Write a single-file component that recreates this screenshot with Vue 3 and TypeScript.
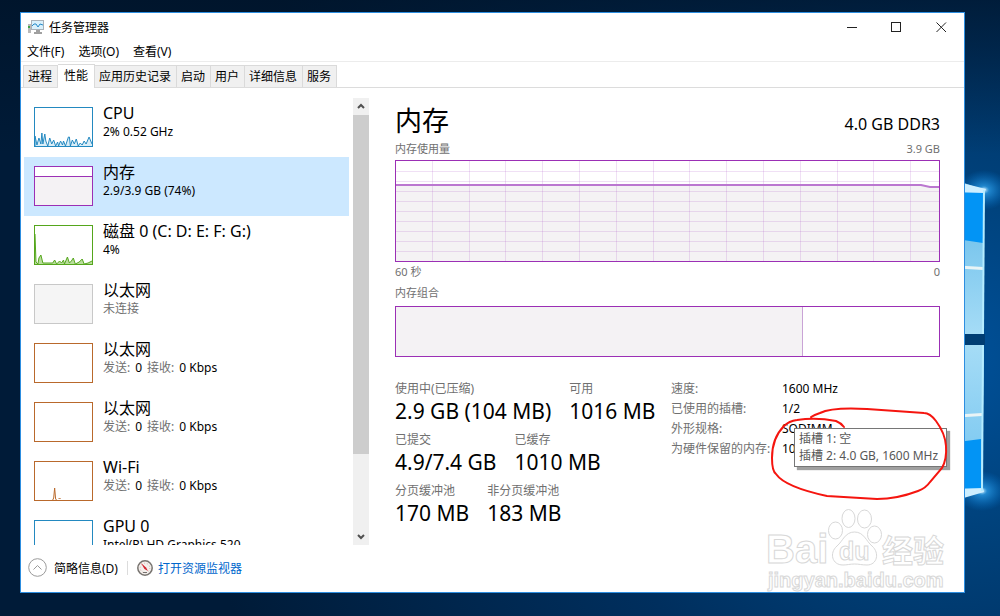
<script setup lang="ts">
interface Resource {
  name: string
  kind: 'cpu' | 'memory' | 'disk' | 'offline' | 'network' | 'gpu'
  parts: { text: string; muted?: boolean }[]
  line?: string
  fill?: boolean
}

const menus: string[] = ['文件(F)', '选项(O)', '查看(V)']
const tabs: string[] = ['进程', '性能', '应用历史记录', '启动', '用户', '详细信息', '服务']
const activeTab = '性能'

const traffic = [
  { text: '发送:', muted: true },
  { text: '0' },
  { text: '接收:', muted: true },
  { text: '0 Kbps' },
]

const resources: Resource[] = [
  {
    name: 'CPU',
    kind: 'cpu',
    parts: [{ text: '2% 0.52 GHz' }],
    line: 'M0 38 L0 28 L2 37 L4 30 L6 36 L7 25 L8 36 L10 26 L11 33 L13 38 L15 30 L17 36 L19 32 L21 38 L23 34 L24 38 L26 33 L28 37 L29 33 L31 38 L34 29 L35 29 L36 38 L38 32 L40 36 L42 31 L44 38 L46 35 L48 37 L50 33 L52 36 L55 29 L58 36',
    fill: true,
  },
  {
    name: '内存',
    kind: 'memory',
    parts: [{ text: '2.9/3.9 GB (74%)' }],
    line: 'M0 9.5 L58 9.5',
    fill: true,
  },
  {
    name: '磁盘 0 (C: D: E: F: G:)',
    kind: 'disk',
    parts: [{ text: '4%' }],
    line: 'M0 8 L1 36 L3 38 L4 32 L6 29 L8 37 L18 37 L20 34 L22 38 L25 35 L27 37 L29 34 L30 38 L33 31 L35 37 L37 35 L39 32 L41 38 L45 36 L48 33 L50 38 L54 37 L58 35',
    fill: true,
  },
  { name: '以太网', kind: 'offline', parts: [{ text: '未连接', muted: true }] },
  { name: '以太网', kind: 'network', parts: traffic },
  { name: '以太网', kind: 'network', parts: traffic },
  {
    name: 'Wi-Fi',
    kind: 'network',
    parts: traffic,
    line: 'M18 38 L19 36 L20 26 L21 37 L22 38 M24 37 L25 36 L26 37',
    fill: true,
  },
  { name: 'GPU 0', kind: 'gpu', parts: [{ text: 'Intel(R) HD Graphics 520' }] },
]
const selected = 1

const gridColumns: number[] = Array.from({ length: 14 }, (_, i) => Math.round((i + 1) * 36.8))
const gridRows: number[] = Array.from({ length: 9 }, (_, i) => (i + 1) * 10)

const usedShare = 75

const stats: { label: string; value: string }[][] = [
  [
    { label: '使用中(已压缩)', value: '2.9 GB (104 MB)' },
    { label: '可用', value: '1016 MB' },
  ],
  [
    { label: '已提交', value: '4.9/7.4 GB' },
    { label: '已缓存', value: '1010 MB' },
  ],
  [
    { label: '分页缓冲池', value: '170 MB' },
    { label: '非分页缓冲池', value: '183 MB' },
  ],
]

const specs: { label: string; value: string }[] = [
  { label: '速度:', value: '1600 MHz' },
  { label: '已使用的插槽:', value: '1/2' },
  { label: '外形规格:', value: 'SODIMM' },
  { label: '为硬件保留的内存:', value: '101 MB' },
]
</script>

<template>
  <div class="desktop">
    <svg class="wallpaper" viewBox="0 0 1000 616" preserveAspectRatio="xMaxYMid slice" aria-hidden="true">
      <defs>
        <radialGradient id="glow" gradientUnits="userSpaceOnUse" cx="950" cy="360" r="760">
          <stop offset="0" stop-color="#00519a" />
          <stop offset="0.22" stop-color="#00427c" />
          <stop offset="0.5" stop-color="#002f5e" />
          <stop offset="1" stop-color="#001b38" />
        </radialGradient>
        <radialGradient id="flare">
          <stop offset="0" stop-color="#d8f3ff" />
          <stop offset="0.2" stop-color="#2fa4f0" stop-opacity="0.7" />
          <stop offset="1" stop-color="#0078d7" stop-opacity="0" />
        </radialGradient>
        <linearGradient id="paneTop" x1="0" y1="0" x2="0" y2="1">
          <stop offset="0" stop-color="#5fb8e8" />
          <stop offset="1" stop-color="#a5dcf6" />
        </linearGradient>
        <linearGradient id="paneBottom" x1="0" y1="0" x2="0" y2="1">
          <stop offset="0" stop-color="#a5dcf6" />
          <stop offset="1" stop-color="#6fc2ef" />
        </linearGradient>
        <linearGradient id="shade" x1="0" y1="0" x2="0" y2="1">
          <stop offset="0" stop-color="#001226" stop-opacity="0.65" />
          <stop offset="0.25" stop-color="#001226" stop-opacity="0" />
          <stop offset="1" stop-color="#001226" stop-opacity="0" />
        </linearGradient>
      </defs>
      <rect width="1000" height="616" fill="url(#glow)" />
      <rect width="1000" height="616" fill="url(#shade)" />
      <ellipse cx="984" cy="190" rx="26" ry="20" fill="url(#flare)" />
      <ellipse cx="982" cy="491" rx="26" ry="20" fill="url(#flare)" />
      <path d="M950 178 L984 190 V334 H950Z" fill="url(#paneTop)" />
      <path d="M950 190 L983 192 V243 L950 238Z" fill="#0294f5" />
      <path d="M950 180 L986 189 L984 193 L950 192Z" fill="#cdeeff" />
      <path d="M950 265 L983 267 V270 L950 268Z" fill="#e9f4f6" />
      <path d="M984 190 L983 334" stroke="#b5ecff" stroke-width="2" />
      <path d="M950 345 H984 L982 491 L950 502Z" fill="url(#paneBottom)" />
      <path d="M950 443 L981 439 V489 H950Z" fill="#0294f5" />
      <path d="M950 415 L982 413 V416 L950 418Z" fill="#e9f4f6" />
      <path d="M950 489 L983 488 L984 492 L950 502Z" fill="#cdeeff" />
      <path d="M983 345 L982 491" stroke="#b5ecff" stroke-width="2" />
      <path d="M950 334 H985 V345 H950Z" fill="#003d73" />
    </svg>

    <div class="window">
      <header class="titlebar">
        <svg class="app-icon" viewBox="0 0 16 14" aria-hidden="true">
          <rect x="0" y="4" width="3" height="9" fill="#b9b9b9" />
          <rect x="0" y="6" width="2" height="2" fill="#3fa447" />
          <rect x="3" y="0" width="13" height="10" fill="#a9b1b8" />
          <rect x="4" y="1" width="11" height="8" fill="#d9f0fb" />
          <path d="M4 6 L6 4 L8 4 L10 7 L12 4 L15 5" fill="none" stroke="#2489c8" />
          <path d="M8 10 H12 V12 H14 V14 H6 V12 H8Z" fill="#a0a0a0" />
        </svg>
        <h1>任务管理器</h1>
        <div class="window-buttons">
          <button type="button" aria-label="最小化">
            <svg viewBox="0 0 11 11"><path d="M1 5.5 H11" /></svg>
          </button>
          <button type="button" aria-label="最大化">
            <svg viewBox="0 0 11 11"><rect x="0.5" y="0.5" width="9" height="9" /></svg>
          </button>
          <button type="button" aria-label="关闭">
            <svg viewBox="0 0 11 11"><path d="M0.5 0.5 L10 10 M10 0.5 L0.5 10" /></svg>
          </button>
        </div>
      </header>

      <nav class="menubar">
        <button v-for="menu in menus" :key="menu" type="button">{{ menu }}</button>
      </nav>

      <div class="tabs" role="tablist">
        <button
          v-for="tab in tabs"
          :key="tab"
          type="button"
          role="tab"
          :aria-selected="tab === activeTab"
          :class="{ active: tab === activeTab }"
        >{{ tab }}</button>
      </div>

      <div class="content">
        <aside class="sidebar">
          <div class="resources">
            <button
              v-for="(item, index) in resources"
              :key="index"
              type="button"
              class="resource"
              :class="[item.kind, { selected: index === selected }]"
            >
              <span class="thumb">
                <svg v-if="item.line" viewBox="0 0 58 38" preserveAspectRatio="none" aria-hidden="true">
                  <path v-if="item.fill" class="area" :d="item.line + ' V38 H0 Z'" />
                  <path class="line" :d="item.line" />
                </svg>
              </span>
              <span class="caption">
                <span class="name">{{ item.name }}</span>
                <span class="detail">
                  <span v-for="(part, n) in item.parts" :key="n" :class="{ muted: part.muted }">{{ part.text }}</span>
                </span>
              </span>
            </button>
          </div>
          <div class="scrollbar" aria-hidden="true">
            <svg viewBox="0 0 16 17"><path d="M5 10 L8 7 L11 10" /></svg>
            <div class="track"><div class="grip"></div></div>
            <svg viewBox="0 0 16 17"><path d="M5 7 L8 10 L11 7" /></svg>
          </div>
        </aside>

        <main class="details">
          <div class="heading">
            <h2>内存</h2>
            <span>4.0 GB DDR3</span>
          </div>
          <div class="axis top"><span>内存使用量</span><span>3.9 GB</span></div>
          <svg class="usage" viewBox="0 0 543 100" preserveAspectRatio="none" role="img" aria-label="内存使用量">
            <path d="M0 24 H525 L534 26 H543 V100 H0Z" fill="#f4f2f4" />
            <g class="grid">
              <path v-for="x in gridColumns" :key="'c' + x" :d="`M${x - 0.5} 0 V100`" />
              <path v-for="y in gridRows" :key="'r' + y" :d="`M0 ${y + 0.5} H543`" />
            </g>
            <path d="M0 24 H525 L534 26 H543" fill="none" stroke="#bb77d0" stroke-width="2" />
          </svg>
          <div class="axis bottom"><span>60 秒</span><span>0</span></div>
          <div class="axis composition-label"><span>内存组合</span></div>
          <div class="composition"><div class="used" :style="{ width: usedShare + '%' }"></div></div>

          <div class="figures">
            <div class="stats">
              <div v-for="(row, r) in stats" :key="r" class="stat-row">
                <div v-for="stat in row" :key="stat.label">
                  <div class="stat-label">{{ stat.label }}</div>
                  <div class="stat-value">{{ stat.value }}</div>
                </div>
              </div>
            </div>
            <div class="spec-area">
              <dl class="specs">
                <template v-for="spec in specs" :key="spec.label">
                  <dt>{{ spec.label }}</dt>
                  <dd>{{ spec.value }}</dd>
                </template>
              </dl>
              <div class="tooltip" role="tooltip">
                <div>插槽 1: 空</div>
                <div>插槽 2: 4.0 GB, 1600 MHz</div>
              </div>
              <svg class="marker" viewBox="671 379 290 130" aria-hidden="true">
                <path d="M844 427 Q841 423 836 421 Q816 417 797 420 Q789 421 784 426 Q772 438 772 458 Q772 471 776 474 Q785 487 827 496 L877 499 Q897 499 918 491 Q926 488 930 482 L942 468 Q947 459 946 446 Q945 433 936 421 Q930 413 924 413 L867 409 Q832 407 820 413 Q814 415 811 417" />
              </svg>
            </div>
          </div>
        </main>
      </div>

      <footer class="footer">
        <button type="button" class="fewer">
          <svg viewBox="0 0 19 19" aria-hidden="true">
            <circle cx="9.5" cy="9.5" r="8.8" />
            <path d="M5.5 11.5 L9.5 7.5 L13.5 11.5" />
          </svg>
          简略信息(D)
        </button>
        <span class="divider"></span>
        <a href="#resource-monitor">
          <svg viewBox="0 0 16 16" aria-hidden="true">
            <circle cx="8" cy="8" r="7.2" fill="#f3efec" stroke="#77736f" stroke-width="1.5" />
            <circle cx="8" cy="8" r="4.8" fill="none" stroke="#d8b3aa" stroke-dasharray="1 2" />
            <path d="M4 3 L9 7.5 L11 11 L7.5 9Z" fill="#d3202b" />
            <path d="M6 12.5 H10" stroke="#77736f" />
          </svg>
          <span>打开资源监视器</span>
        </a>
      </footer>

      <svg class="watermark" viewBox="744 503 220 89" aria-hidden="true">
        <text class="latin" x="766" y="563" font-size="40">Bai</text>
        <ellipse cx="835.5" cy="530.5" rx="7" ry="8.5" />
        <ellipse cx="848.5" cy="518.5" rx="6.5" ry="9" />
        <ellipse cx="864.5" cy="519" rx="7" ry="9" />
        <ellipse cx="874.5" cy="534.5" rx="7" ry="8.5" />
        <path d="M854.5 532 C864 532 866 541 872 546 C880 553 877 565 867 565 C862 565 859 564 854.5 564 C850 564 847 565 843 565 C832 565 829 553 837 546 C843 541 845 532 854.5 532Z" />
        <text class="latin" x="839" y="560" font-size="25">du</text>
        <text class="cjk" x="882" y="562" font-size="31">经验</text>
        <text class="latin" x="768" y="587" font-size="20">jingyan.baidu.com</text>
      </svg>
    </div>
  </div>
</template>

<style>
body {
  margin: 0;
}
</style>

<style scoped>
.desktop {
  position: relative;
  display: flex;
  box-sizing: border-box;
  height: 100vh;
  padding: 12px 35px 23px 20px;
  overflow: hidden;
  background: #002348;
  color: #000;
  font-family: "Noto Sans", "Noto Sans CJK SC", sans-serif;
  font-size: 12px;
}

.wallpaper {
  position: absolute;
  inset: 0;
  width: 100%;
  height: 100%;
}

.window {
  position: relative;
  display: flex;
  flex: 1;
  flex-direction: column;
  min-width: 0;
  border: 1px solid #2d8ee0;
  background: #fff;
}

button {
  margin: 0;
  padding: 0;
  border: 0;
  background: none;
  color: inherit;
  font: inherit;
}

h1,
h2,
dl,
dd {
  margin: 0;
  font-weight: 400;
}

.titlebar {
  display: flex;
  align-items: center;
  height: 28px;
  padding-left: 7px;
}

.app-icon {
  width: 16px;
  height: 14px;
  margin-right: 5px;
}

.titlebar h1 {
  flex: 1;
  font-size: 12px;
}

.window-buttons {
  display: flex;
}

.window-buttons button {
  display: grid;
  width: 45px;
  height: 28px;
  place-items: center;
}

.window-buttons svg {
  width: 11px;
  height: 11px;
  fill: none;
  stroke: #222;
}

.menubar {
  display: flex;
  gap: 14px;
  height: 20px;
  padding-left: 6px;
  border-bottom: 1px solid #ececec;
  line-height: 22px;
}

.tabs {
  display: flex;
  align-items: flex-end;
  height: 25px;
  padding-left: 2px;
  border-bottom: 1px solid #dcdcdc;
}

.tabs button {
  height: 22px;
  padding: 0 5px 0 4px;
  border: 1px solid #dadada;
  border-bottom: 0;
  border-left: 0;
  background: #f0f0f0;
  line-height: 22px;
}

.tabs button:first-child {
  border-left: 1px solid #dadada;
}

.tabs button.active {
  height: 24px;
  margin-bottom: -1px;
  padding: 0 6px 2px;
  background: #fff;
}

.content {
  display: flex;
  flex: 1;
  min-height: 0;
}

.sidebar {
  display: flex;
  flex: 0 0 345px;
  gap: 4px;
  padding: 10px 0 0 3px;
}

.resources {
  display: flex;
  flex: 1;
  flex-direction: column;
  overflow: hidden;
}

.resource {
  display: flex;
  flex: 0 0 59px;
  align-items: flex-start;
  gap: 10px;
  padding: 6px 10px 0;
  text-align: left;
}

.resource.selected {
  background: #cce8ff;
}

.thumb {
  display: block;
  flex: none;
  width: 57px;
  height: 38px;
  margin-top: 3px;
  border: 1px solid var(--accent);
  background: #fff;
}

.thumb svg {
  display: block;
  width: 100%;
  height: 100%;
}

.area {
  fill: var(--wash);
}

.line {
  fill: none;
  stroke: var(--accent);
}

.cpu,
.gpu {
  --accent: #2389c0;
  --wash: #d9edf7;
}

.memory {
  --accent: #9b2fb5;
  --wash: #f4f2f4;
}

.disk {
  --accent: #55a61c;
  --wash: #b9dd9c;
}

.network {
  --accent: #b9692c;
  --wash: none;
}

.offline {
  --accent: #c8c8c8;
}

.offline .thumb {
  background: #f5f5f5;
}

.caption {
  display: flex;
  flex-direction: column;
  line-height: 18px;
  white-space: nowrap;
}

.name {
  font-size: 16px;
}

.detail {
  display: flex;
  gap: 5px;
  line-height: 20px;
}

.muted {
  color: #707070;
}

.scrollbar {
  display: flex;
  flex: 0 0 16px;
  flex-direction: column;
  background: #f0f0f0;
}

.scrollbar svg {
  flex: 0 0 17px;
  width: 16px;
  fill: none;
  stroke: #505050;
  stroke-width: 2;
}

.track {
  flex: 1;
}

.grip {
  height: 82%;
  background: #cdcdcd;
}

.details {
  flex: 1;
  min-width: 0;
  padding: 14px 24px 0 26px;
}

.heading {
  display: flex;
  align-items: flex-end;
  justify-content: space-between;
  font-size: 16px;
  line-height: 32px;
}

.heading h2 {
  font-size: 27px;
  line-height: 38px;
}

.axis {
  display: flex;
  justify-content: space-between;
  color: #707070;
  font-size: 11px;
  line-height: 18px;
}

.axis.bottom {
  line-height: 20px;
}

.axis.composition-label {
  line-height: 22px;
}

.usage {
  display: block;
  box-sizing: border-box;
  width: 100%;
  height: 102px;
  margin-top: 2px;
  border: 1px solid #9b2fb5;
}

.grid path {
  stroke: #a040c0;
  stroke-opacity: 0.16;
}

.composition {
  box-sizing: border-box;
  height: 51px;
  margin-top: 2px;
  border: 1px solid #9b2fb5;
}

.used {
  box-sizing: border-box;
  height: 100%;
  border-right: 1px solid #c9a3d6;
  background: #f4f2f4;
}

.figures {
  display: flex;
  gap: 12px;
  margin-top: 22px;
}

.stats {
  display: flex;
  flex: 0 0 264px;
  flex-direction: column;
  gap: 7px;
}

.stat-row {
  display: flex;
  gap: 18px;
  white-space: nowrap;
}

.stat-label {
  color: #707070;
  line-height: 20px;
}

.stat-value {
  font-size: 21px;
  line-height: 24px;
}

.spec-area {
  position: relative;
  flex: 1;
}

.specs {
  display: grid;
  grid-template-columns: 111px 1fr;
  line-height: 20px;
  white-space: nowrap;
}

.specs dt {
  color: #707070;
}

.tooltip {
  position: absolute;
  top: 49px;
  left: 123px;
  padding: 1px 8px 2px 4px;
  border: 1px solid #767676;
  background: #fff;
  box-shadow: 3px 3px 1px #a0a0a0;
  color: #575757;
  line-height: 17px;
  white-space: nowrap;
}

.marker {
  position: absolute;
  top: 0;
  left: 0;
  width: 290px;
  height: 130px;
  fill: none;
  stroke: #f5150f;
  stroke-linecap: round;
  stroke-width: 2;
  pointer-events: none;
}

.footer {
  display: flex;
  align-items: center;
  height: 45px;
  padding: 0 0 2px 7px;
}

.fewer {
  display: flex;
  align-items: center;
  gap: 7px;
}

.fewer svg {
  width: 19px;
  height: 19px;
  fill: none;
  stroke: #9a9a9a;
}

.divider {
  width: 1px;
  height: 14px;
  margin: 0 9px;
  background: #dcdcdc;
}

.footer a {
  display: flex;
  align-items: center;
  gap: 5px;
  color: #0066cc;
  text-decoration: none;
}

.footer a svg {
  width: 16px;
  height: 16px;
}

.watermark {
  position: absolute;
  right: 0;
  bottom: 0;
  width: 220px;
  height: 89px;
  fill: #fff;
  stroke: #d8d8d8;
  pointer-events: none;
}

.latin {
  font-family: "Liberation Sans", sans-serif;
  font-weight: 700;
}

.cjk {
  font-family: "Noto Sans CJK SC", sans-serif;
  font-weight: 700;
}
</style>
